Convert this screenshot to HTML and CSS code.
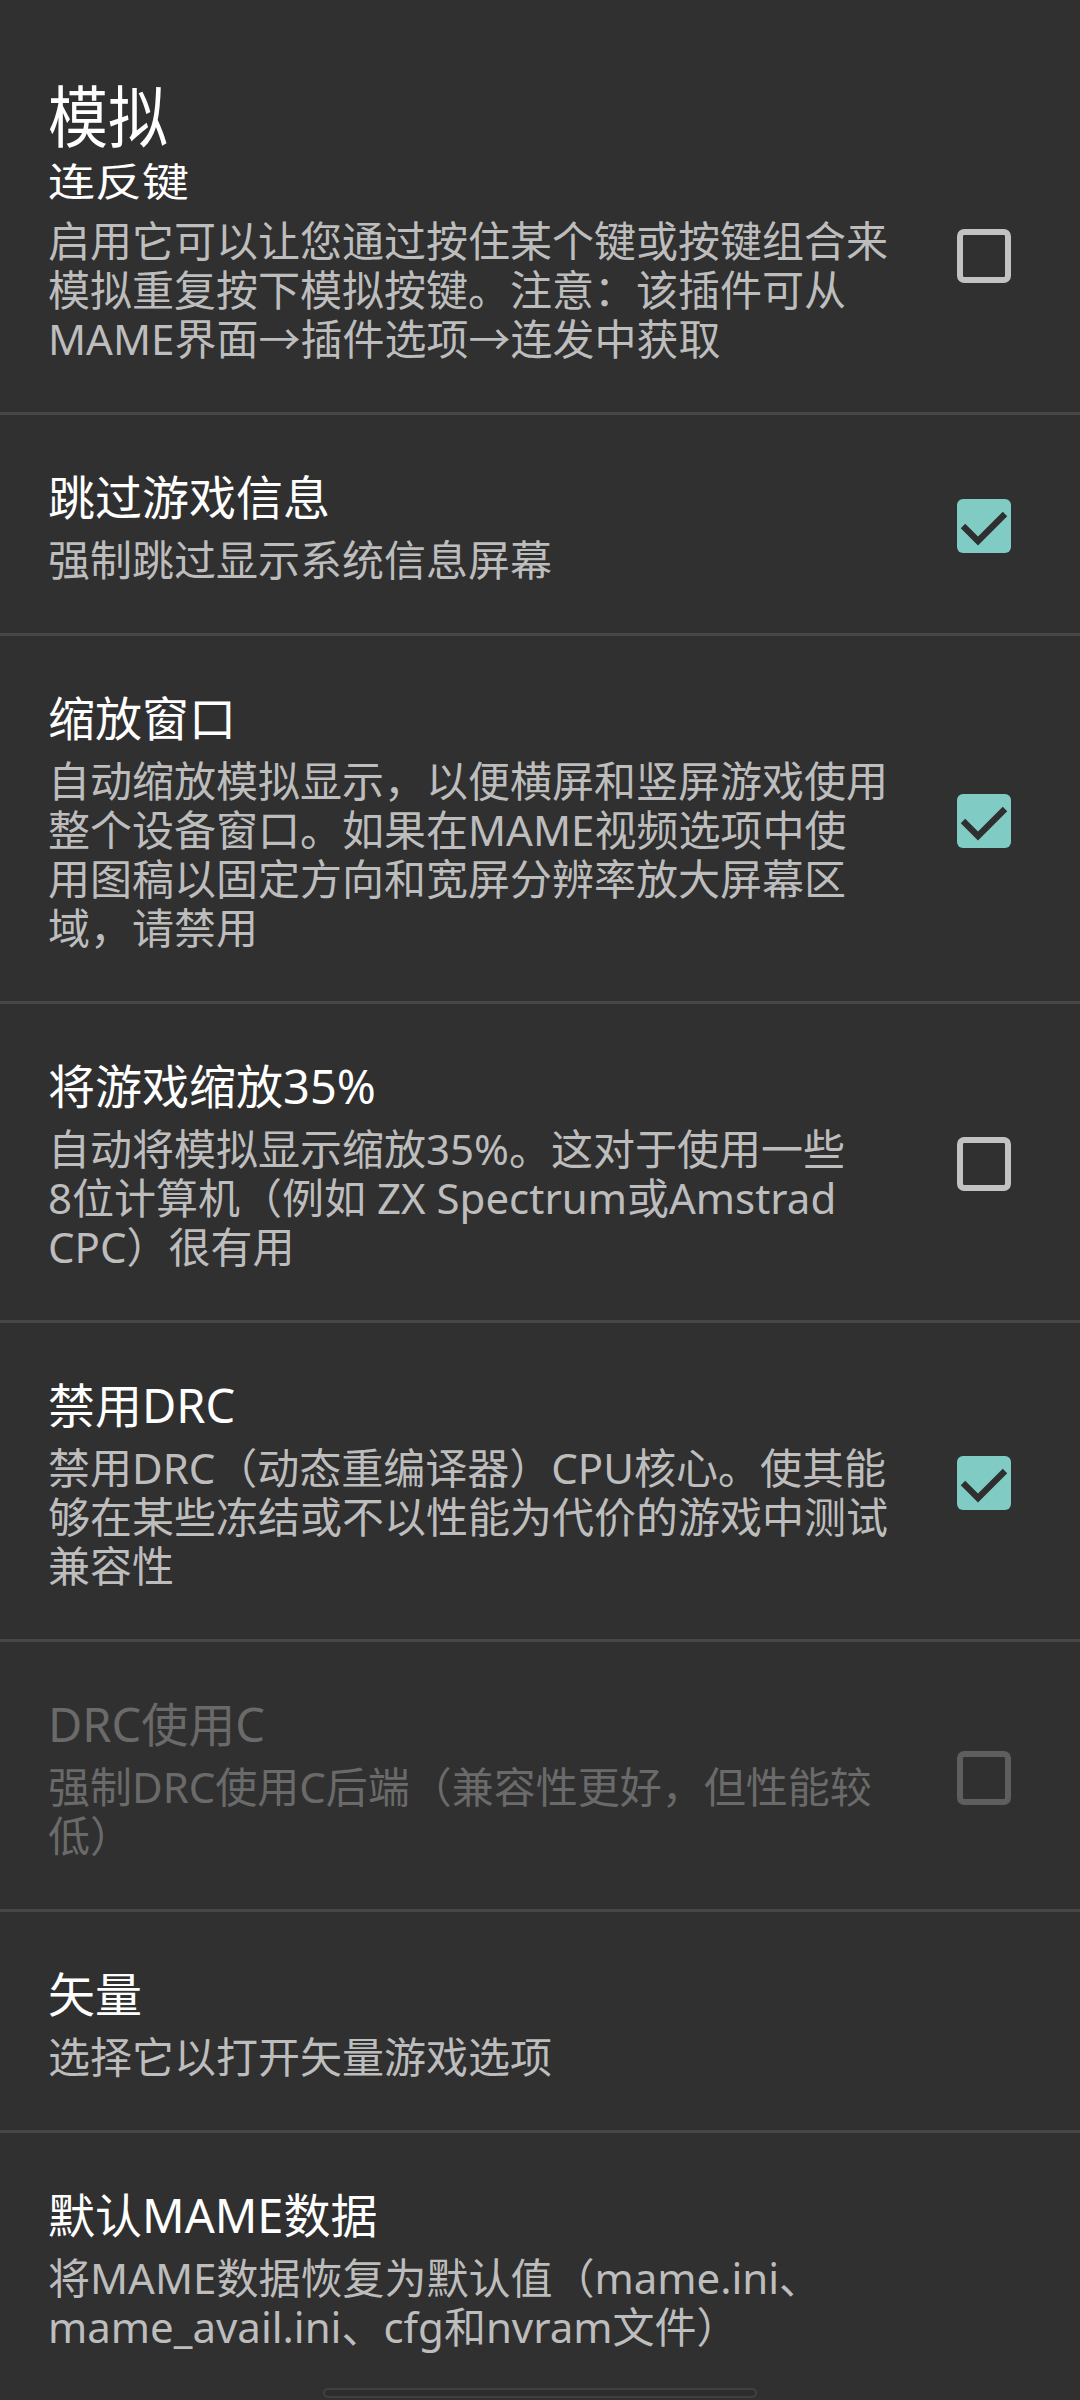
FILE: index.html
```html
<!DOCTYPE html>
<html lang="zh-CN">
<head>
<meta charset="utf-8">
<title>模拟</title>
<link rel="stylesheet" href="styles.css">
</head>
<body>
<main class="screen">
  <h1 class="category">模拟</h1>

  <div class="pref pref-first">
    <div class="pref-text">
      <div class="pref-title squash">连反键</div>
      <div class="pref-summary">启用它可以让您通过按住某个键或按键组合来<br>模拟重复按下模拟按键。注意：该插件可从<br>MAME界面→插件选项→连发中获取</div>
    </div>
    <div class="pref-widget">
      <svg class="cb" viewBox="0 0 18 18"><rect class="cb-off" x="1" y="1" width="16" height="16" rx="1.4"/></svg>
    </div>
  </div>

  <div class="pref">
    <div class="pref-text">
      <div class="pref-title">跳过游戏信息</div>
      <div class="pref-summary">强制跳过显示系统信息屏幕</div>
    </div>
    <div class="pref-widget">
      <svg class="cb" viewBox="0 0 18 18"><rect class="cb-on" x="0" y="0" width="18" height="18" rx="2"/><path class="cb-tick" d="M2 9l5 5 9-9"/></svg>
    </div>
  </div>

  <div class="pref">
    <div class="pref-text">
      <div class="pref-title">缩放窗口</div>
      <div class="pref-summary">自动缩放模拟显示，以便横屏和竖屏游戏使用<br>整个设备窗口。如果在MAME视频选项中使<br>用图稿以固定方向和宽屏分辨率放大屏幕区<br>域，请禁用</div>
    </div>
    <div class="pref-widget">
      <svg class="cb" viewBox="0 0 18 18"><rect class="cb-on" x="0" y="0" width="18" height="18" rx="2"/><path class="cb-tick" d="M2 9l5 5 9-9"/></svg>
    </div>
  </div>

  <div class="pref">
    <div class="pref-text">
      <div class="pref-title">将游戏缩放35%</div>
      <div class="pref-summary">自动将模拟显示缩放35%。这对于使用一些<br>8位计算机（例如 ZX Spectrum或Amstrad<br>CPC）很有用</div>
    </div>
    <div class="pref-widget">
      <svg class="cb" viewBox="0 0 18 18"><rect class="cb-off" x="1" y="1" width="16" height="16" rx="1.4"/></svg>
    </div>
  </div>

  <div class="pref">
    <div class="pref-text">
      <div class="pref-title">禁用DRC</div>
      <div class="pref-summary">禁用DRC（动态重编译器）CPU核心。使其能<br>够在某些冻结或不以性能为代价的游戏中测试<br>兼容性</div>
    </div>
    <div class="pref-widget">
      <svg class="cb" viewBox="0 0 18 18"><rect class="cb-on" x="0" y="0" width="18" height="18" rx="2"/><path class="cb-tick" d="M2 9l5 5 9-9"/></svg>
    </div>
  </div>

  <div class="pref pref-disabled">
    <div class="pref-text">
      <div class="pref-title">DRC使用C</div>
      <div class="pref-summary">强制DRC使用C后端（兼容性更好，但性能较<br>低）</div>
    </div>
    <div class="pref-widget">
      <svg class="cb" viewBox="0 0 18 18"><rect class="cb-off" x="1" y="1" width="16" height="16" rx="1.4"/></svg>
    </div>
  </div>

  <div class="pref">
    <div class="pref-text">
      <div class="pref-title">矢量</div>
      <div class="pref-summary">选择它以打开矢量游戏选项</div>
    </div>
  </div>

  <div class="pref">
    <div class="pref-text">
      <div class="pref-title">默认MAME数据</div>
      <div class="pref-summary">将MAME数据恢复为默认值（mame.ini、<br>mame_avail.ini、cfg和nvram文件）</div>
    </div>
  </div>
</main>
<div class="gesture-bar"></div>
</body>
</html>
```

FILE: styles.css
```css
html, body {
  margin: 0;
  padding: 0;
  background: #303030;
}

body {
  font-family: "Noto Sans", "Noto Sans CJK SC", sans-serif;
  color: #ffffff;
  height: 2400px;
  overflow: hidden;
}

.screen {
  display: flex;
  flex-direction: column;
}

.category {
  margin: 0;
  padding: 70px 0 0 48px;
  font-size: 60px;
  line-height: 77px;
  font-weight: 400;
  color: #ffffff;
  transform: scaleY(1.12);
  transform-origin: 0 40px;
}

.pref {
  display: flex;
  align-items: center;
  border-top: 3px solid #474747;
  padding: 53px 0 49px 48px;
}

.pref-first {
  border-top: none;
  padding-top: 2px;
}

.pref-text {
  flex: 1;
  min-width: 0;
}

.pref-title {
  font-size: 47px;
  line-height: 58px;
  padding-bottom: 9px;
  color: #ffffff;
  white-space: nowrap;
}

.squash {
  transform: scaleY(0.82);
  transform-origin: 0 46px;
}

.pref-summary {
  font-size: 42px;
  line-height: 49px;
  color: #bdbdbd;
  white-space: nowrap;
}

.pref-disabled .pref-title,
.pref-disabled .pref-summary {
  color: #6a6a6a;
}

.pref-widget {
  flex: none;
  width: 54px;
  height: 54px;
  margin: 0 69px 0 30px;
}

.cb {
  display: block;
  width: 54px;
  height: 54px;
}

.cb-off {
  fill: none;
  stroke: #c2c2c2;
  stroke-width: 2;
}

.pref-disabled .cb-off {
  stroke: #5e5e5e;
}

.cb-on {
  fill: #80cbc4;
}

.cb-tick {
  fill: none;
  stroke: #2f2f2f;
  stroke-width: 2.1;
}

.gesture-bar {
  position: fixed;
  left: 323px;
  bottom: 2px;
  width: 430px;
  height: 6px;
  border: 2px solid #404040;
  border-radius: 6px;
  background: #2d2d2d;
}
```
